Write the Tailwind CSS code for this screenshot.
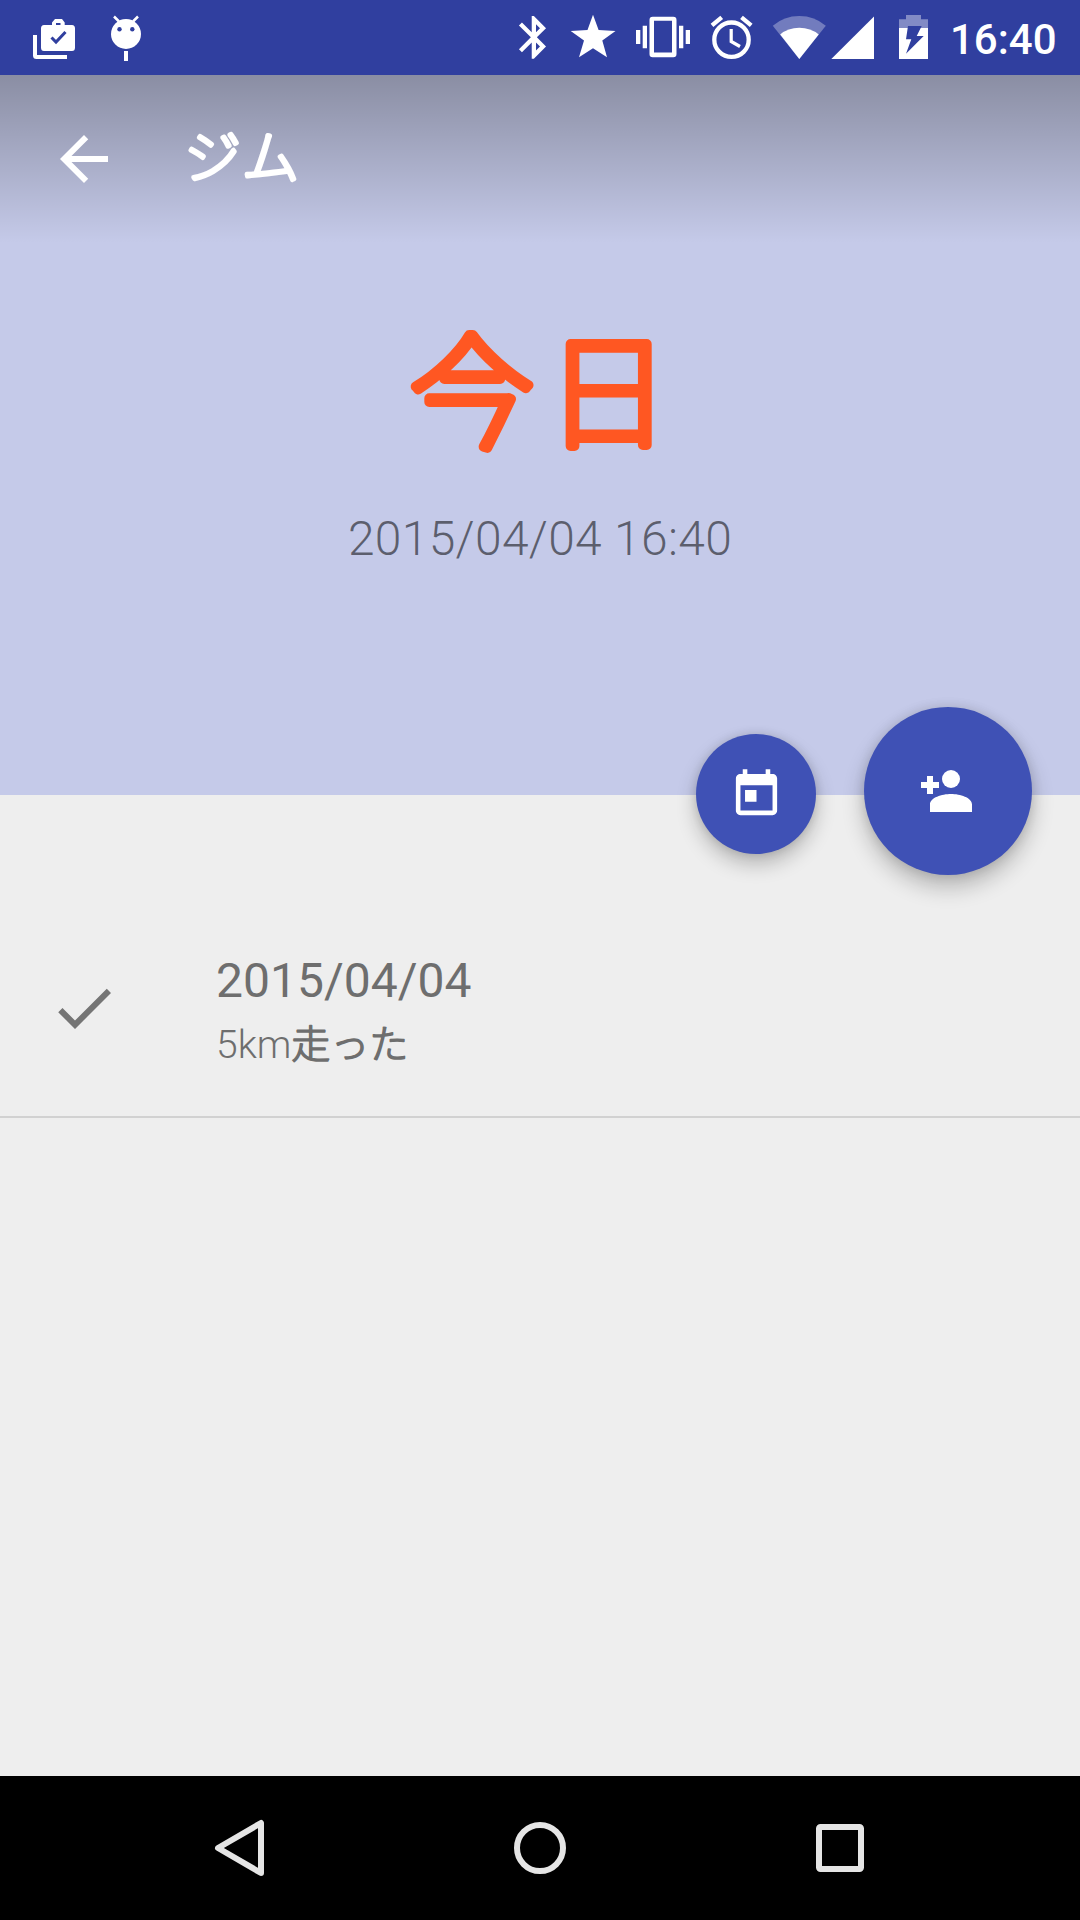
<!DOCTYPE html>
<html lang="ja">
<head>
<meta charset="utf-8">
<title>ジム</title>
<script src="https://cdn.jsdelivr.net/npm/@tailwindcss/browser@4"></script>
</head>
<body class="bg-black">
<div class="flex h-[1920px] w-[1080px] flex-col overflow-hidden bg-[#eeeeee] font-[Roboto,'Noto_Sans_CJK_JP',sans-serif]">

  <!-- Status bar -->
  <header class="flex h-[75px] shrink-0 items-center bg-[#303f9f] pl-[30px] pr-[24px] text-white">
    <svg class="h-[75px] w-[48px]" viewBox="30 0 48 75" fill="none">
      <path d="M35 35V55.500Q35 57 36.500 57H67" stroke="#fff" stroke-width="4"/>
      <path fill="#fff" fill-rule="evenodd" d="M44 25H52V22.500L55 19H62L64.700 22.500V25H72Q75 25 75 28.500V47.500Q75 51 72 51H44Q41 51 41 47.500V28.500Q41 25 44 25ZM56 23V25H60.500V23Z"/>
      <path d="M51.500 37.500L56 42L65.500 32" stroke="#303f9f" stroke-width="3"/>
    </svg>
    <svg class="ml-[30px] h-[75px] w-[36px]" viewBox="108 0 36 75" fill="none">
      <circle cx="126" cy="34" r="15" fill="#fff"/>
      <path d="M114 16.500L119 21.500M138 16.500L133 21.500" stroke="#fff" stroke-width="2.500"/>
      <path d="M126 51V61" stroke="#fff" stroke-width="4"/>
      <circle cx="119.500" cy="29.300" r="2.200" fill="#303f9f"/><circle cx="132.300" cy="29.300" r="2.200" fill="#303f9f"/>
    </svg>
    <svg class="ml-auto h-[75px] w-[32px]" viewBox="516 0 32 75" fill="#fff">
      <path transform="translate(508.300 11.800) scale(2.130)" d="M17.710 7.710L12 2h-1v7.590L6.410 5 5 6.410 10.590 12 5 17.590 6.410 19 11 14.410V22h1l5.710-5.710-4.300-4.290 4.300-4.290zM13 5.830l1.880 1.880L13 9.590V5.830zm1.880 10.460L13 18.170v-3.760l1.880 1.880z"/>
    </svg>
    <svg class="ml-[20px] h-[75px] w-[50px]" viewBox="568 0 50 75" fill="#fff">
      <path d="M593 14.800L598.600 30L615.500 31L602.300 40.500L607 57.300L593 48.200L579 57.300L584 40.500L570.700 31L587.500 30Z"/>
    </svg>
    <svg class="ml-[16px] h-[75px] w-[58px]" viewBox="634 0 58 75" fill="#fff">
      <path fill-rule="evenodd" d="M652.700 16.700H673.300Q676.500 16.700 676.500 20V54Q676.500 57.300 673.300 57.300H652.700Q649.500 57.300 649.500 54V20Q649.500 16.700 652.700 16.700ZM654 20.800V52.500H672V20.800Z"/>
      <path d="M636 30h4.300v14H636zM642.700 25.700h4.300v22.600h-4.300zM679 25.700h4.300v22.600H679zM685.700 30h4.300v14h-4.300z"/>
    </svg>
    <svg class="ml-[16px] h-[75px] w-[48px]" viewBox="708 0 48 75" fill="none" stroke="#fff">
      <circle cx="731.500" cy="39.700" r="17.200" stroke-width="4.300"/>
      <path d="M712 25.300L721.700 17.300M751.200 25.300L741.500 17.300" stroke-width="4.300"/>
      <path d="M731.200 29V41.500L740 46.500" stroke-width="3.200"/>
    </svg>
    <svg class="ml-[14px] h-[75px] w-[58px]" viewBox="770 0 58 75" fill="#fff">
      <path fill-opacity=".32" d="M772.800 25.700Q784 16 799.300 16T825.800 25.700L799.300 58.900Z"/>
      <path d="M780.200 34.400Q788 27.700 799.300 27.700T818.700 34.400L799.300 58.900Z"/>
    </svg>
    <svg class="ml-[2px] h-[75px] w-[46px]" viewBox="830 0 46 75" fill="#fff"><path d="M831.300 59L874 16.500V59Z"/></svg>
    <svg class="ml-[20px] h-[75px] w-[34px]" viewBox="896 0 34 75" fill="#fff">
      <path fill-opacity=".4" d="M899 28V19.300H906V15H921V19.300H928V28Z"/>
      <path d="M899 28H928V59H899Z"/>
      <path fill="#303f9f" d="M908 26H921.700L916.700 36H923.700L906 53.700L911.300 39.300H906Z"/>
    </svg>
    <span class="ml-[20px] w-[106px] pt-[5px] text-right text-[42px] leading-[48px] font-medium">16:40</span>
  </header>

  <!-- Header panel -->
  <section class="relative flex h-[720px] shrink-0 flex-col items-center bg-[#c5cae9]">
    <div class="flex h-[168px] w-full items-center bg-linear-to-b from-black/30 to-transparent pl-[48px]">
      <svg class="size-[72px]" viewBox="0 0 24 24" fill="#fff"><path d="M20 11H7.830l5.590-5.590L12 4l-8 8 8 8 1.410-1.410L7.830 13H20v-2z"/></svg>
      <svg class="ml-[60px] h-[84px] w-[130px] overflow-visible font-['Noto_Sans_CJK_JP',sans-serif] font-thin" fill="#fff" stroke="#fff" stroke-width="4.500" stroke-linejoin="round"><text x="4" y="61" font-size="57" letter-spacing="1">ジム</text></svg>
    </div>
    <svg class="mt-[48px] h-[200px] w-[270px] overflow-visible font-['Noto_Sans_CJK_JP',sans-serif] font-thin" fill="#ff5722" stroke="#ff5722" stroke-width="10" stroke-linejoin="round"><text x="5" y="147" font-size="124" letter-spacing="12">今日</text></svg>
    <p class="mt-[20px] text-[48px] leading-[56px] font-light tracking-[0.3px] text-black/54">2015/04/04 16:40</p>

    <button class="absolute left-[696px] top-[659px] flex size-[120px] items-center justify-center rounded-full bg-[#3f51b5] pl-[1px] shadow-[0_10px_20px_rgba(0,0,0,0.24),0_0_10px_rgba(0,0,0,0.12)]">
      <svg class="size-[55px]" viewBox="0 0 24 24" fill="#fff"><path d="M19 3h-1V1h-2v2H8V1H6v2H5c-1.110 0-1.990.900-1.990 2L3 19c0 1.100.890 2 2 2h14c1.100 0 2-.900 2-2V5c0-1.100-.900-2-2-2zm0 16H5V8h14v11zM7 10h5v5.200H7z"/></svg>
    </button>
    <button class="absolute left-[864px] top-[632px] flex size-[168px] items-center justify-center rounded-full bg-[#3f51b5] shadow-[0_12px_22px_rgba(0,0,0,0.24),0_0_12px_rgba(0,0,0,0.12)]">
      <svg class="size-[72px]" viewBox="912 755 72 72" fill="#fff">
        <circle cx="951" cy="779" r="9"/>
        <path d="M927 776h6v6h6v6h-6v6h-6v-6h-6v-6h6zM930 812V804.500C930 797.500 942 794 951 794S972 797.500 972 804.500V812Z"/>
      </svg>
    </button>
  </section>

  <!-- History -->
  <main class="grow pt-[105px]">
    <article class="flex h-[218px] items-center border-b-2 border-[#d1d1d1] pl-[48px] text-[#6e6e6e]">
      <svg class="size-[72px]" viewBox="0 0 24 24" fill="#757575"><path d="M9 16.170L4.830 12l-1.420 1.410L9 19 21 7l-1.410-1.410z"/></svg>
      <div class="ml-[96px] pt-[2px]">
        <h2 class="text-[48px] leading-[64px]">2015/04/04</h2>
        <svg class="h-[56px] w-[220px] overflow-visible font-light" fill="currentColor"><text x="0" y="45" font-size="39">5km<tspan class="font-light font-['Noto_Sans_CJK_JP',sans-serif]" stroke="currentColor" stroke-width="1.500" stroke-linejoin="round">走った</tspan></text></svg>
      </div>
    </article>
  </main>

  <!-- Navigation bar -->
  <nav class="flex h-[144px] shrink-0 items-center justify-between bg-black px-[204px]">
    <svg class="size-[72px]" viewBox="204 1812 72 72" fill="none" stroke="#e5e5e5" stroke-width="6" stroke-linejoin="round"><path d="M261 1823V1873L218 1848Z"/></svg>
    <svg class="size-[72px]" viewBox="504 1812 72 72" fill="none" stroke="#e5e5e5" stroke-width="6"><circle cx="540" cy="1848" r="23"/></svg>
    <svg class="size-[72px]" viewBox="804 1812 72 72" fill="none" stroke="#e5e5e5" stroke-width="6"><rect x="819" y="1827" width="42" height="42" rx="1.500"/></svg>
  </nav>
</div>
</body>
</html>
